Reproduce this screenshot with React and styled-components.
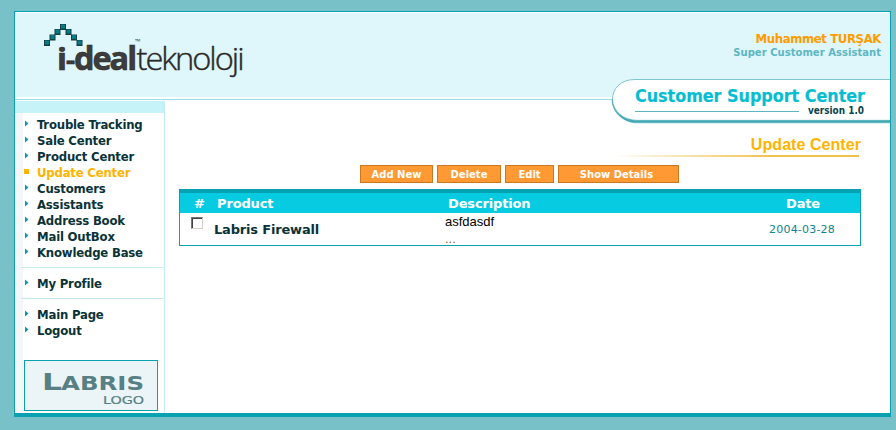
import React from "react";
import styled, { createGlobalStyle } from "styled-components";

const GlobalStyle = createGlobalStyle`
  * { box-sizing: border-box; }
  body { margin: 0; background: #79c1c9; font-family: "DejaVu Sans", Verdana, sans-serif; }
`;

const Page = styled.div`
  height: 430px;
  padding: 11px 5px 0 14px;
  overflow: hidden;
`;
const Frame = styled.div`
  height: 406px;
  display: flex;
  flex-direction: column;
  background: #fff;
  border: 1px solid #07a1b1;
  border-bottom-width: 4px;
`;
const Header = styled.header`
  position: relative;
  height: 88px;
  flex: none;
  padding: 1px 0 2px 1px;
  border-bottom: 1px solid #9be0e4;
`;
const Banner = styled.div`
  height: 84px;
  display: flex;
  justify-content: space-between;
  background: #dff6fa;
`;
const Brand = styled.svg`
  display: block;
  margin: 7px 0 0 24px;
`;
const User = styled.div`
  padding: 18px 9px 0 0;
  text-align: right;
  font-weight: bold;
`;
const UserName = styled.div`
  font-family: "DejaVu Sans Condensed", "DejaVu Sans", sans-serif;
  font-stretch: condensed;
  font-size: 13px;
  line-height: 16px;
  letter-spacing: -0.38px;
  color: #ff9c00;
`;
const UserRole = styled.div`
  font-size: 10px;
  line-height: 12px;
  letter-spacing: 0.04px;
  color: #5cb7c3;
`;
const Badge = styled.svg`
  position: absolute;
  right: 0;
  top: 66px;
`;
const Body = styled.div`
  flex: 1;
  display: flex;
`;
const Sidebar = styled.aside`
  width: 150px;
  flex: none;
  margin-top: 1px;
  border-right: 1px solid #c5ebef;
  display: flex;
  flex-direction: column;
`;
const SidebarCap = styled.div`
  height: 12px;
  flex: none;
  background: #c6f3f8;
`;
const Menu = styled.nav`
  flex: 1;
  margin-left: 1px;
  padding: 3px 1px 0 5px;
  background: linear-gradient(to right, #f3f7f9 7px, #fff 7px);
`;
const MenuItem = styled.a`
  display: flex;
  align-items: center;
  height: 16px;
  padding-left: 3px;
  font-family: "DejaVu Sans Condensed", "DejaVu Sans", sans-serif;
  font-stretch: condensed;
  font-weight: bold;
  font-size: 13px;
  letter-spacing: -0.2px;
  white-space: nowrap;
  color: ${(p) => (p.$active ? "#ffb400" : "#0a3338")};
`;
const Marker = styled.svg`
  flex: none;
  width: 6px;
  height: 8px;
  margin: 0 7px 0 0;
`;
const Divider = styled.div`
  height: 1px;
  margin: 7px 0;
  background: #c5ebef;
`;
const Partner = styled.svg`
  display: block;
  margin: 22px 0 0 3px;
`;
const Content = styled.main`
  flex: 1;
  padding: 35px 29px 0 14px;
`;
const TitleBlock = styled.div`
  height: 22px;
  text-align: right;
`;
const Title = styled.h1`
  margin: 0;
  height: 20px;
  font: bold 16px/20px "Liberation Sans", Arial, sans-serif;
  letter-spacing: 0.06px;
  color: #ffb400;
`;
const TitleRule = styled.div`
  height: 2px;
  width: 245px;
  margin: 0 2px 0 auto;
  background: linear-gradient(to right, #fff, #f0c14d 65%);
`;
const Toolbar = styled.div`
  display: flex;
  gap: 4px;
  margin: 8px 0 6px 181px;
`;
const Button = styled.button`
  width: ${(p) => p.$w}px;
  height: 18px;
  padding: 1px ${(p) => p.$shift || 0}px 0 0;
  border: 1px solid #cc7722;
  border-radius: 0;
  background: #ff9933;
  color: #fff;
  font: bold 10px/15px "DejaVu Sans", Verdana, sans-serif;
`;
const Table = styled.div`
  border: 1px solid #07a1b1;
  border-top-width: 4px;
`;
const HeadRow = styled.div`
  display: grid;
  grid-template-columns: 37px 231px 1fr 116px;
  height: 20px;
  line-height: 21px;
  background: #07cbe1;
  color: #fff;
  font-weight: bold;
  font-size: 13px;
  letter-spacing: -0.15px;
`;
const HeadCell = styled.div`
  padding-left: ${(p) => p.$indent || 0}px;
  text-align: ${(p) => (p.$center ? "center" : "left")};
`;
const Row = styled.div`
  display: grid;
  grid-template-columns: 34px 231px 1fr 116px;
  height: 32px;
`;
const CheckBox = styled.div`
  width: 12px;
  height: 12px;
  margin: 4px 0 0 11px;
  background: #fff;
  border: 1px solid;
  border-color: #777 #d4d0c8 #d4d0c8 #777;
  box-shadow: inset 1px 1px 0 #444;
`;
const Product = styled.div`
  line-height: 33px;
  font-weight: bold;
  font-size: 13px;
  letter-spacing: -0.18px;
  color: #0a3338;
`;
const Description = styled.div`
  font: 13px/17px "Liberation Sans", Arial, sans-serif;
  color: #000;
`;
const More = styled.div`
  line-height: 17px;
  color: #8a6a20;
`;
const DateCell = styled.div`
  line-height: 33px;
  text-align: center;
  font-size: 11px;
  letter-spacing: 0.2px;
  color: #0b8590;
`;

const roof = [[16.5, 4], [11, 9], [6, 14.5], [0.5, 20], [22, 9], [27.5, 14.5], [33, 20]];

function Item({ children, active }) {
  return (
    <MenuItem $active={active}>
      <Marker viewBox="0 0 6 8">
        {active ? <rect x="0" y="1" width="5" height="5" fill="#ffb400" /> : <path d="M1 0.5L4.5 3.5L1 6.5Z" fill="#079aa9" />}
      </Marker>
      {children}
    </MenuItem>
  );
}

export default function App() {
  return (
    <>
      <GlobalStyle />
      <Page>
        <Frame>
          <Header>
            <Banner>
              <Brand width="210" height="68" viewBox="-3 0 210 68">
                {roof.map(([x, y]) => (
                  <g key={x}>
                    <rect x={x + 0.5} y={y} width="6" height="6" fill="#173f46" />
                    <rect x={x + 1.5} y={y + 0.5} width="4" height="4" fill="#087b86" />
                  </g>
                ))}
                <g fontFamily="Open Sans" fontWeight="700" fontSize="32" fill="#3d3d3d" stroke="#292929" strokeWidth=".6">
                  <text x="14" y="49.5" fontSize="31" textLength="10" lengthAdjust="spacingAndGlyphs">i</text>
                  <text x="23" y="49" fontSize="25" textLength="9" lengthAdjust="spacingAndGlyphs">-</text>
                  <text x="31" y="49.5" letterSpacing="-2" textLength="61" lengthAdjust="spacingAndGlyphs">deal</text>
                </g>
                <text x="93.5" y="49.5" fontFamily="Open Sans" fontWeight="300" fontSize="32" letterSpacing="-2" fill="#292929" stroke="#292929" strokeWidth=".4" textLength="106" lengthAdjust="spacingAndGlyphs">teknoloji</text>
                <text x="92" y="24" fontFamily="Open Sans" fontSize="7" fontWeight="700" fill="#555">™</text>
              </Brand>
              <User>
                <UserName>Muhammet TURŞAK</UserName>
                <UserRole>Super Customer Assistant</UserRole>
              </User>
            </Banner>
            <Badge width="279" height="47" viewBox="0 0 279 47">
              <path d="M279 1.5H24C9 1.5 1.5 11 1.5 21.5C1.5 33 12 43.5 30 43.5H279Z" fill="#fff" />
              <path d="M279 1.5H24C9 1.5 1.5 11 1.5 21.5" fill="none" stroke="#7fc6ce" />
              <path d="M1.5 21.5C2 33 12 42.3 26 42.3H279V44.8H24C12 44 1 34 1 21.5Z" fill="#43a9b5" stroke="#43a9b5" strokeWidth=".6" />
              <text x="24" y="24" fontFamily="DejaVu Sans Condensed, DejaVu Sans" fontStretch="condensed" fontWeight="bold" fontSize="18" fill="#06bdd2" stroke="#06bdd2" strokeWidth=".2" textLength="230" lengthAdjust="spacingAndGlyphs">Customer Support Center</text>
              <path d="M24 33.5H188" stroke="#5cb5bf" />
              <text x="197" y="36" fontFamily="DejaVu Sans Condensed, DejaVu Sans" fontStretch="condensed" fontWeight="bold" fontSize="10" fill="#07444c" textLength="56" lengthAdjust="spacingAndGlyphs">version 1.0</text>
            </Badge>
          </Header>
          <Body>
            <Sidebar>
              <SidebarCap />
              <Menu>
                <Item>Trouble Tracking</Item>
                <Item>Sale Center</Item>
                <Item>Product Center</Item>
                <Item active>Update Center</Item>
                <Item>Customers</Item>
                <Item>Assistants</Item>
                <Item>Address Book</Item>
                <Item>Mail OutBox</Item>
                <Item>Knowledge Base</Item>
                <Divider />
                <Item>My Profile</Item>
                <Divider />
                <Item>Main Page</Item>
                <Item>Logout</Item>
                <Partner width="134" height="51" viewBox="0 0 134 51">
                  <rect x=".5" y=".5" width="133" height="50" fill="#ebf5f7" stroke="#07a1b1" />
                  <g fontFamily="DejaVu Sans" fill="#577f84">
                    <text x="18" y="30" fontWeight="bold" fontSize="23" textLength="20" lengthAdjust="spacingAndGlyphs">L</text>
                    <text x="37" y="30" fontWeight="bold" fontSize="19" textLength="83" lengthAdjust="spacingAndGlyphs">ABRIS</text>
                    <text x="79" y="44" fontSize="11" stroke="#577f84" strokeWidth=".2" textLength="41" lengthAdjust="spacingAndGlyphs">LOGO</text>
                  </g>
                </Partner>
              </Menu>
            </Sidebar>
            <Content>
              <TitleBlock>
                <Title>Update Center</Title>
                <TitleRule />
              </TitleBlock>
              <Toolbar>
                <Button $w={73}>Add New</Button>
                <Button $w={64}>Delete</Button>
                <Button $w={49}>Edit</Button>
                <Button $w={121} $shift={4}>Show Details</Button>
              </Toolbar>
              <Table>
                <HeadRow>
                  <HeadCell $indent={14}>#</HeadCell>
                  <HeadCell>Product</HeadCell>
                  <HeadCell>Description</HeadCell>
                  <HeadCell $center $indent={2}>Date</HeadCell>
                </HeadRow>
                <Row>
                  <CheckBox />
                  <Product>Labris Firewall</Product>
                  <Description>
                    asfdasdf
                    <More>...</More>
                  </Description>
                  <DateCell>2004-03-28</DateCell>
                </Row>
              </Table>
            </Content>
          </Body>
        </Frame>
      </Page>
    </>
  );
}
